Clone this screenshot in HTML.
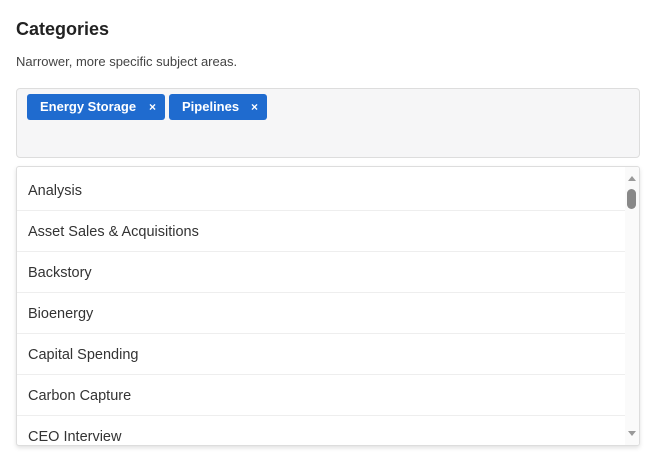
<!DOCTYPE html>
<html><head><style>
*{box-sizing:border-box;margin:0;padding:0}
body{width:656px;height:464px;background:#fff;font-family:"Liberation Sans",sans-serif;position:relative;overflow:hidden}
h1{position:absolute;left:16px;top:19px;font-size:18px;font-weight:bold;color:#222}
.sub{position:absolute;left:16px;top:54px;font-size:13px;color:#444}
.box{position:absolute;left:16px;top:88px;width:624px;height:70px;background:#f6f6f7;border:1px solid #ddd;border-radius:4px}
.chip{position:absolute;top:94px;height:26px;background:#1f6bcf;color:#fff;border-radius:3px;font-size:13px;font-weight:bold;line-height:26px;padding-left:13px}
.chip span{position:absolute;right:9px;font-size:12px}
.dd{position:absolute;left:16px;top:166px;width:624px;height:280px;border:1px solid #ddd;border-radius:3px;box-shadow:0 2px 4px rgba(0,0,0,.12);overflow:hidden;background:#fff;padding-top:3px}
.row{height:41px;line-height:43px;padding-left:11px;font-size:14.5px;color:#333;border-bottom:1px solid #eee;width:609px}
.sb{position:absolute;right:0;top:0;width:14px;height:100%;background:#fafafa}
.th{position:absolute;left:2px;top:22px;width:9px;height:20px;background:#888;border-radius:5px}
.up,.dn{position:absolute;left:3px;width:0;height:0;border-left:4px solid transparent;border-right:4px solid transparent}
.up{top:9px;border-bottom:5px solid #999}.dn{bottom:9px;border-top:5px solid #999}
</style></head><body>
<h1>Categories</h1>
<div class="sub">Narrower, more specific subject areas.</div>
<div class="box"></div>
<div class="chip" style="left:27px;width:138px">Energy Storage<span>×</span></div>
<div class="chip" style="left:169px;width:98px">Pipelines<span>×</span></div>
<div class="dd">
<div class="row">Analysis</div>
<div class="row">Asset Sales &amp; Acquisitions</div>
<div class="row">Backstory</div>
<div class="row">Bioenergy</div>
<div class="row">Capital Spending</div>
<div class="row">Carbon Capture</div>
<div class="row">CEO Interview</div>
<div class="sb"><div class="up"></div><div class="th"></div><div class="dn"></div></div>
</div>
</body></html>
